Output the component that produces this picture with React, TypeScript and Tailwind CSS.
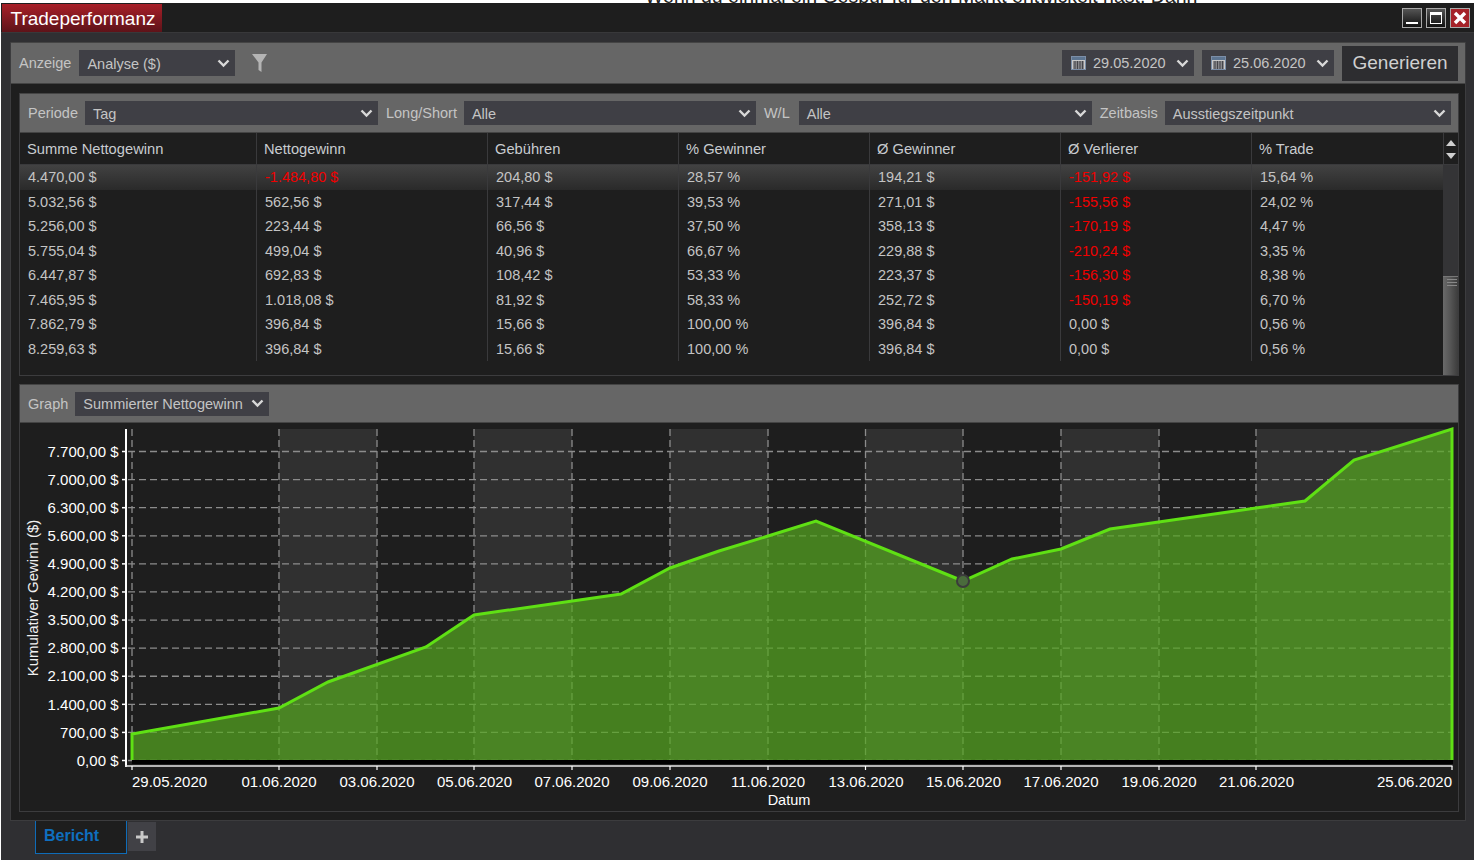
function Chevron({ className = '' }: { className?: string }) {
  return (
    <svg width="13" height="9" viewBox="0 0 13 9" className={className}>
      <path d="M1.5 1.5 6.5 6.5 11.5 1.5" fill="none" stroke="#d8d8d8" strokeWidth="2.4" />
    </svg>
  );
}

function CalendarIcon() {
  return (
    <svg width="15" height="14" viewBox="0 0 15 14" className="shrink-0">
      <rect x="0.5" y="0.5" width="14" height="13" fill="#c9c9c9" stroke="#7b8ea8" />
      <rect x="1" y="1" width="13" height="3" fill="#5d7591" />
      <path
        d="M2 6h11M2 8h11M2 10h11M2 12h11M4 5v8M6.5 5v8M9 5v8M11.500 5v8"
        stroke="#45454a"
        strokeWidth="1"
      />
    </svg>
  );
}

function Select({
  label,
  width,
  height = 'h-6',
  className = '',
}: {
  label: string;
  width: string;
  height?: string;
  className?: string;
}) {
  return (
    <div className={`flex ${height} ${width} shrink-0 items-center justify-between overflow-hidden bg-[#3f3f45] pl-2 pr-[5px] ${className}`}>
      <span className="mt-[2px] text-[14.5px] leading-none text-[#c4c4c4]">{label}</span>
      <Chevron />
    </div>
  );
}

function DatePicker({ value, width }: { value: string; width: string }) {
  return (
    <div className={`flex h-[26px] ${width} items-center bg-[#3f3f45] pl-[9px] pr-[5px]`}>
      <CalendarIcon />
      <span className="ml-[7px] mt-[1px] flex-1 text-[14.5px] leading-none text-[#c4c4c4]">{value}</span>
      <Chevron />
    </div>
  );
}

function BarLabel({ children, className = '' }: { children: string; className?: string }) {
  return <span className={`mt-[2px] text-[14.5px] text-[#c4c4c4] ${className}`}>{children}</span>;
}

const columns = ['Summe Nettogewinn', 'Nettogewinn', 'Gebühren', '% Gewinner', 'Ø Gewinner', 'Ø Verlierer', '% Trade'];

const rows = [
  ['4.470,00 $', '-1.484,80 $', '204,80 $', '28,57 %', '194,21 $', '-151,92 $', '15,64 %'],
  ['5.032,56 $', '562,56 $', '317,44 $', '39,53 %', '271,01 $', '-155,56 $', '24,02 %'],
  ['5.256,00 $', '223,44 $', '66,56 $', '37,50 %', '358,13 $', '-170,19 $', '4,47 %'],
  ['5.755,04 $', '499,04 $', '40,96 $', '66,67 %', '229,88 $', '-210,24 $', '3,35 %'],
  ['6.447,87 $', '692,83 $', '108,42 $', '53,33 %', '223,37 $', '-156,30 $', '8,38 %'],
  ['7.465,95 $', '1.018,08 $', '81,92 $', '58,33 %', '252,72 $', '-150,19 $', '6,70 %'],
  ['7.862,79 $', '396,84 $', '15,66 $', '100,00 %', '396,84 $', '0,00 $', '0,56 %'],
  ['8.259,63 $', '396,84 $', '15,66 $', '100,00 %', '396,84 $', '0,00 $', '0,56 %'],
];

const colWidths = ['w-[237px]', 'w-[231px]', 'w-[191px]', 'w-[191px]', 'w-[191px]', 'w-[191px]', 'w-[192px]'];

function ReportTable() {
  return (
    <div className="flex h-[243px] border-b border-[#3c3c3e]">
      <div className="w-[1423px] shrink-0">
        <div className="flex h-8 border-b border-[#3a3a3c]">
          {columns.map((col, i) => (
            <div
              key={col}
              className={`${colWidths[i]} flex shrink-0 items-center border-r border-[#3a3a3c] pl-[7px] pt-[2px] text-[14.7px] text-[#c8ccd0] last:border-r-0`}
            >
              {col}
            </div>
          ))}
        </div>
        {rows.map((row, r) => (
          <div
            key={row[0]}
            className={`flex h-[24.5px] ${r === 0 ? 'bg-gradient-to-b from-[#424242] to-[#2a2a2a]' : ''}`}
          >
            {row.map((cell, i) => (
              <div
                key={i}
                className={`${colWidths[i]} flex shrink-0 items-center border-r border-[#3a3a3c] pl-2 pt-[2px] text-[14.5px] last:border-r-0 ${
                  cell.startsWith('-') ? 'text-[#f00000]' : 'text-[#c4c4c4]'
                }`}
              >
                {cell}
              </div>
            ))}
          </div>
        ))}
      </div>
      <div className="flex w-[16px] flex-col">
        <div className="flex h-8 flex-col items-center justify-center gap-[7px] border-b border-l border-[#3a3a3c] bg-[#1e1e1e] pt-[1px]">
          <svg width="10" height="6" viewBox="0 0 10 6">
            <path d="M5 0 10 6H0Z" fill="#d0d0d0" />
          </svg>
          <svg width="10" height="6" viewBox="0 0 10 6">
            <path d="M0 0H10L5 6Z" fill="#d0d0d0" />
          </svg>
        </div>
        <div className="h-[111px] bg-[#343436]" />
        <div className="relative flex-1 border-t border-[#777] bg-gradient-to-r from-[#6a6a6a] via-[#555] to-[#3c3c3c]">
          <div className="ml-[4px] mt-[2px] flex w-[10px] flex-col gap-[2px]">
            <div className="h-px bg-[#888]" />
            <div className="h-px bg-[#888]" />
            <div className="h-px bg-[#888]" />
          </div>
        </div>
      </div>
    </div>
  );
}

const yLabels = ['0,00 $', '700,00 $', '1.400,00 $', '2.100,00 $', '2.800,00 $', '3.500,00 $', '4.200,00 $', '4.900,00 $', '5.600,00 $', '6.300,00 $', '7.000,00 $', '7.700,00 $'];
const xGrid = [132, 279, 377, 474, 572, 670, 768, 865.5, 963, 1061, 1159, 1256, 1452];
const xLabels = [
  ['29.05.2020', 132, 'start'],
  ['01.06.2020', 279, 'middle'],
  ['03.06.2020', 377, 'middle'],
  ['05.06.2020', 474.5, 'middle'],
  ['07.06.2020', 572, 'middle'],
  ['09.06.2020', 670, 'middle'],
  ['11.06.2020', 768, 'middle'],
  ['13.06.2020', 866, 'middle'],
  ['15.06.2020', 963.5, 'middle'],
  ['17.06.2020', 1061, 'middle'],
  ['19.06.2020', 1159, 'middle'],
  ['21.06.2020', 1256.5, 'middle'],
  ['25.06.2020', 1452, 'end'],
] as const;
const bands = [
  [279, 377],
  [474, 572],
  [670, 768],
  [865, 963],
  [1061, 1159],
  [1256, 1452],
];
const points = '132,734 279,708 328,682 426,647 474,615 621,594 670,568 719,551 768,536 816,521 963,581 1012,559 1061,549 1110,529 1256,508 1305,501 1354,460 1452,429';

function Chart() {
  return (
    <svg width="1438" height="388" viewBox="20 423 1438 388" className="block bg-[#1e1e1e]">
      {bands.map(([a, b]) => (
        <rect key={a} x={a} y={429} width={b - a} height={331} fill="#303030" />
      ))}
      {yLabels.map((label, i) => {
        const y = 760.5 - 28.09 * i;
        return (
          <g key={label}>
            <path d={`M122 ${y}H126`} stroke="#fff" strokeWidth="1.5" />
            <path d={`M128 ${y}H1452`} stroke="#8c8c8c" strokeWidth="1.3" strokeDasharray="7 4" />
            <text x="118.500" y={y + 5.2} textAnchor="end" fontSize="15" fill="#fff">
              {label}
            </text>
          </g>
        );
      })}
      {xGrid.map((x) => (
        <path key={x} d={`M${x} 429V760`} stroke="#8c8c8c" strokeWidth="1.3" strokeDasharray="7 4" />
      ))}
      <polygon points={`132,760 ${points} 1452,760`} fill="#55a820" opacity="0.7" />
      <polyline points={`132,760 ${points} 1452,760`} fill="none" stroke="#5fe014" strokeWidth="3" strokeLinejoin="miter" />
      <rect x="132" y="760" width="1321" height="4" fill="#000" />
      <circle cx="963" cy="581" r="6" fill="#4a6b3c" stroke="#3b3b3b" strokeWidth="2" />
      <path d="M126 429V767" stroke="#fff" strokeWidth="2" />
      <path d="M125 766H1452.500" stroke="#e8e8e8" strokeWidth="1.500" />
      {xGrid.map((x) => (
        <path key={x} d={`M${x} 766V770`} stroke="#fff" strokeWidth="1.200" />
      ))}
      {xLabels.map(([label, x, anchor]) => (
        <text key={label} x={x} y="787" textAnchor={anchor} fontSize="15" fill="#fff">
          {label}
        </text>
      ))}
      <text x="789" y="804.500" textAnchor="middle" fontSize="14.5" fill="#fff">
        Datum
      </text>
      <text x="37.500" y="598" textAnchor="middle" fontSize="15" fill="#f0f0f0" transform="rotate(-90 37.500 598)">
        Kumulativer Gewinn ($)
      </text>
    </svg>
  );
}

export default function App() {
  return (
    <div className="flex h-[860px] w-[1474px] flex-col overflow-hidden bg-white font-['Liberation_Sans',sans-serif]">
      {/* page text behind the window, only the last pixels peek out */}
      <div className="h-[3px] shrink-0 overflow-hidden pl-[645px]">
        <div className="-mt-[14px] whitespace-nowrap text-[19.5px] leading-[20px] text-[#222]">
          Wenn du einmal ein Gespür für den Markt entwickelt hast. Dann
        </div>
      </div>

      <div className="ml-[1px] flex flex-1 flex-col bg-[#2f2f32]">
        {/* title bar */}
        <div className="flex h-[30px] shrink-0 items-stretch justify-between border-b border-[#38383a] bg-[#1e1e1e]">
          <div className="ml-[1px] mt-[1px] flex w-[160px] items-center justify-center bg-gradient-to-b from-[#a81f28] to-[#5e1319] pl-[2px] text-[19px] leading-none text-white">
            Tradeperformanz
          </div>
          <div className="mr-[4px] mt-[5px] flex gap-1">
            <div className="flex h-5 w-5 items-end justify-center border border-[#aaa] bg-gradient-to-b from-[#555] to-[#111] pb-[3px]">
              <div className="h-[2px] w-3 bg-white" />
            </div>
            <div className="flex h-5 w-5 items-center justify-center border border-[#aaa] bg-gradient-to-b from-[#555] to-[#111]">
              <div className="h-3 w-3 border border-t-[3px] border-white" />
            </div>
            <div className="flex h-5 w-5 items-center justify-center border border-[#aaa] bg-[#a52228]">
              <svg width="14" height="14" viewBox="0 0 14 14">
                <path d="M2 2 12 12M12 2 2 12" stroke="#fff" strokeWidth="3.400" />
              </svg>
            </div>
          </div>
        </div>

        {/* outer panel */}
        <div className="ml-[9px] mr-[8px] mt-[9px] flex h-[779px] shrink-0 flex-col border border-[#3c3c3e] border-t-0 bg-[#1e1e1e]">
          <div className="flex h-[42px] shrink-0 items-center border-y border-[#444] bg-[#666666] pl-2 pr-[7px]">
            <BarLabel>Anzeige</BarLabel>
            <Select label="Analyse ($)" width="w-[156px]" height="h-[26px]" className="ml-[8px]" />
            <svg width="15" height="18" viewBox="0 0 15 18" className="ml-[17px]">
              <path d="M0 0H15L9.500 8.500V18L6.500 16V8.500Z" fill="#b4b4b4" />
            </svg>
            <div className="flex-1" />
            <DatePicker value="29.05.2020" width="w-[132px]" />
            <div className="w-2" />
            <DatePicker value="25.06.2020" width="w-[132px]" />
            <div className="ml-2 flex h-[35px] w-[116px] items-center justify-center bg-[#2d2d30] pb-[2px] text-[19px] leading-none text-[#d0d0d0]">
              Generieren
            </div>
          </div>

          <div className="mx-[8px] mt-[9px] w-[1440px] border-x border-[#3c3c3e]">
            <div className="flex h-[40px] items-center border-y border-[#444] bg-[#666666] pl-2 pr-[7px]">
              <BarLabel>Periode</BarLabel>
              <Select label="Tag" width="w-[293px]" className="ml-[7px]" />
              <BarLabel className="ml-[8px]">Long/Short</BarLabel>
              <Select label="Alle" width="w-[292px]" className="ml-[7px]" />
              <BarLabel className="ml-[8px]">W/L</BarLabel>
              <Select label="Alle" width="w-[293px]" className="ml-[9px]" />
              <BarLabel className="ml-[8px]">Zeitbasis</BarLabel>
              <Select label="Ausstiegszeitpunkt" width="w-[286px]" className="ml-[7px]" />
            </div>
            <ReportTable />
          </div>

          <div className="mx-[8px] mt-[8px] w-[1440px] border-x border-b border-[#3c3c3e]">
            <div className="flex h-[39px] items-center border-y border-[#444] bg-[#666666] pl-2">
              <BarLabel>Graph</BarLabel>
              <Select label="Summierter Nettogewinn" width="w-[194px]" className="ml-[7px]" />
            </div>
            <Chart />
          </div>
        </div>

        {/* tabs */}
        <div className="flex items-start pl-[34px]">
          <div className="flex h-[33px] w-[92px] items-center border-x border-b border-[#0f6cb8] bg-[#1e1e1e] pb-[2px] pl-2 text-[16px] font-bold text-[#0f6fbf]">
            Bericht
          </div>
          <div className="ml-[1px] mt-[1px] flex h-[29px] w-[28px] items-center justify-center bg-[#414146]">
            <svg width="14" height="14" viewBox="0 0 14 14">
              <path d="M7 1V13M1 7H13" stroke="#c8c8c8" strokeWidth="3" />
            </svg>
          </div>
        </div>
      </div>
    </div>
  );
}
